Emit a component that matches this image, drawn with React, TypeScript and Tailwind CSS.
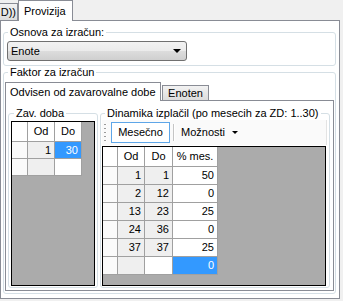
import React from 'react';

type Tone = 'ro' | 'rw' | 'sel';
type Cell = { text: string; tone: Tone };
type Col = { label: string; w: string };

interface GridProps {
  size: string;
  rowHeaderW: string;
  cols: Col[];
  rowH: string;
  rows: Cell[][];
}

const toneClass: Record<Tone, string> = {
  ro: 'bg-[#efefef] text-black',
  rw: 'bg-white text-black',
  sel: 'bg-[#3399ff] text-white',
};

function DataGrid({ size, rowHeaderW, cols, rowH, rows }: GridProps) {
  return (
    <div className={`${size} overflow-hidden border border-black bg-[#ababab]`}>
      <div className="flex h-[20px]">
        <div className={`${rowHeaderW} border-r border-b border-[#a0a0a0] bg-white`} />
        {cols.map((c) => (
          <div
            key={c.label}
            className={`${c.w} flex items-center justify-center border-r border-b border-[#a0a0a0] bg-white`}
          >
            {c.label}
          </div>
        ))}
      </div>
      {rows.map((row, i) => (
        <div key={i} className={`flex ${rowH}`}>
          <div className={`${rowHeaderW} border-r border-b border-[#a0a0a0] bg-[#fafafa]`} />
          {row.map((cell, j) => (
            <div
              key={j}
              className={`${cols[j].w} ${toneClass[cell.tone]} flex items-center justify-end border-r border-b border-[#a0a0a0] pr-[3px]`}
            >
              {cell.text}
            </div>
          ))}
        </div>
      ))}
    </div>
  );
}

function Arrow() {
  return <span className="h-0 w-0 border-x-[3px] border-t-[3px] border-x-transparent border-t-black" />;
}

function Grip() {
  return (
    <svg width="3" height="17" viewBox="0 0 3 17">
      {[0, 4, 8, 12, 16].map((y) => (
        <g key={y}>
          <rect x="1" y={y} width="2" height="1" fill="#ffffff" />
          <rect x="0" y={y} width="2" height="1" fill="#9a9a9a" />
        </g>
      ))}
    </svg>
  );
}

const zavCols: Col[] = [
  { label: 'Od', w: 'w-[27px]' },
  { label: 'Do', w: 'w-[27px]' },
];

const zavRows: Cell[][] = [
  [
    { text: '1', tone: 'ro' },
    { text: '30', tone: 'sel' },
  ],
  [
    { text: '', tone: 'ro' },
    { text: '', tone: 'rw' },
  ],
];

const dinCols: Col[] = [
  { label: 'Od', w: 'w-[27px]' },
  { label: 'Do', w: 'w-[28px]' },
  { label: '% mes.', w: 'w-[45px]' },
];

const dinData = [
  ['1', '1', '50'],
  ['2', '12', '0'],
  ['13', '23', '25'],
  ['24', '36', '0'],
  ['37', '37', '25'],
];

const dinRows: Cell[][] = [
  ...dinData.map((r) => [
    { text: r[0], tone: 'ro' as Tone },
    { text: r[1], tone: 'ro' as Tone },
    { text: r[2], tone: 'rw' as Tone },
  ]),
  [
    { text: '', tone: 'ro' },
    { text: '', tone: 'rw' },
    { text: '0', tone: 'sel' },
  ],
];

export default function App() {
  return (
    <div className="h-[301px] w-[343px] overflow-hidden bg-[#f0f0f0] font-['Liberation_Sans',Arial,sans-serif] text-[11px] leading-[13px] text-black">
      {/* tabs */}
      <div className="flex h-[20px] items-end">
        <div className="flex h-[17px] w-[18px] items-center justify-end whitespace-nowrap border-t border-r border-[#898c95] bg-[linear-gradient(#f2f2f2,#dcdcdc)] pr-px">
          D))
        </div>
        <div className="relative z-10 -mb-px flex h-[21px] w-[55px] items-center border border-b-0 border-[#898c95] bg-white pl-[5px]">
          Provizija
        </div>
      </div>

      {/* tab page */}
      <div className="h-[279px] w-[340px] border border-[#898c95] bg-white pl-[2px] pt-[5px]">
        <fieldset className="w-[333px] rounded-[3px] border border-[#d5dfe5] pb-[4px] pl-[3px]">
          <legend className="ml-[1px] px-[2px] leading-[13px]">Osnova za izračun:</legend>
          <div className="mt-[2px] flex h-[20px] w-[180px] items-center justify-between rounded-[3px] border border-[#707070] bg-[linear-gradient(#f2f2f2_0%,#ebebeb_50%,#dddddd_50%,#cfcfcf_100%)] pl-[3px] pr-[5px]">
            <span>Enote</span>
            <span className="h-0 w-0 border-x-[4px] border-t-[4px] border-x-transparent border-t-black" />
          </div>
        </fieldset>

        <fieldset className="h-[228px] w-[333px] rounded-[3px] border border-[#d5dfe5] pb-[2px] pl-[1px]">
          <legend className="ml-[3px] px-[2px] leading-[13px]">Faktor za izračun</legend>
          <div className="mt-[3px] flex h-[18px] items-end">
            <div className="relative z-10 -mb-px flex h-[19px] w-[156px] items-center border border-b-0 border-[#898c95] bg-white pl-[4px]">
              Odvisen od zavarovalne dobe
            </div>
            <div className="ml-[1px] flex h-[15px] w-[47px] items-center justify-center border border-b-0 border-[#898c95] bg-[linear-gradient(#f2f2f2,#dcdcdc)]">
              Enoten
            </div>
          </div>

          <div className="flex h-[191px] w-[329px] gap-[2px] border border-[#898c95] bg-white pl-[2px] pt-[6px]">
            <fieldset className="h-[181px] w-[90px] rounded-[3px] border border-[#d5dfe5] pl-[2px]">
              <legend className="ml-[3px] px-[2px] leading-[13px]">Zav. doba</legend>
              <div className="mt-[1px]">
                <DataGrid size="h-[165px] w-[84px]" rowHeaderW="w-[16px]" cols={zavCols} rowH="h-[17px]" rows={zavRows} />
              </div>
            </fieldset>

            <fieldset className="h-[181px] w-[230px] rounded-[3px] border border-[#d5dfe5] pl-[1px]">
              <legend className="ml-[3px] px-[2px] leading-[13px]">Dinamika izplačil (po mesecih za ZD: 1..30)</legend>
              <div className="flex h-[25px] w-[225px] items-center border-r border-[#e3e3e3] bg-[#fafafa] pl-[2px]">
                <Grip />
                <div className="ml-[4px] flex h-[21px] w-[59px] items-center justify-center border border-[#5ea6e8] bg-white">
                  Mesečno
                </div>
                <div className="ml-[3px] h-[17px] w-[2px] border-l border-[#c5c5c5] bg-white" />
                <div className="ml-[3px] flex items-center gap-[7px] px-[3px]">
                  <span>Možnosti</span>
                  <Arrow />
                </div>
              </div>
              <div className="mt-[1px]">
                <DataGrid size="h-[140px] w-[224px]" rowHeaderW="w-[15px]" cols={dinCols} rowH="h-[18px]" rows={dinRows} />
              </div>
            </fieldset>
          </div>
        </fieldset>
      </div>
    </div>
  );
}
